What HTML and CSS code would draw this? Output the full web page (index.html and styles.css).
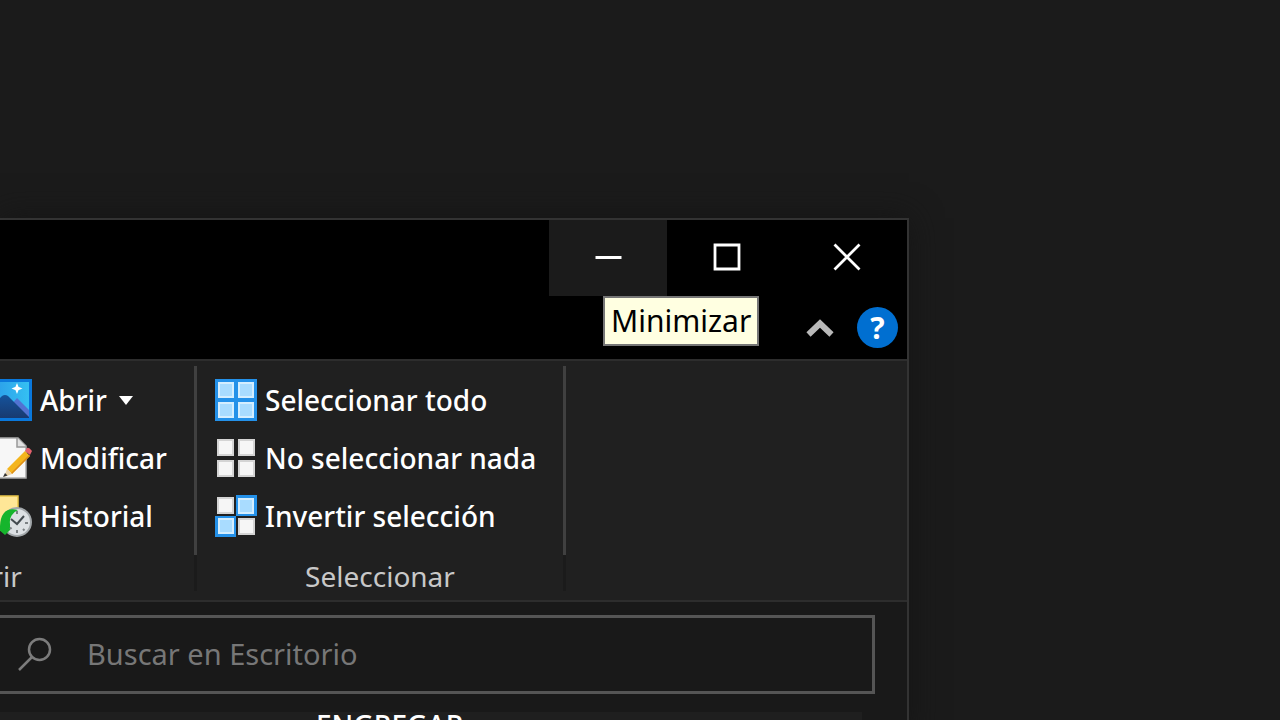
FILE: index.html
```html
<!DOCTYPE html>
<html lang="es">
<head>
<meta charset="utf-8">
<meta name="viewport" content="width=device-width, initial-scale=1">
<title>Escritorio</title>
<link rel="stylesheet" href="styles.css">
</head>
<body>
<main class="desktop">
  <section class="window">
    <header class="titlebar">
      <div class="caption">
        <button class="caption-btn minimize" type="button" aria-label="Minimizar" aria-describedby="tip">
          <svg width="28" height="28" viewBox="0 0 28 28"><path d="M1.500 14.500h26" stroke="#fff" stroke-width="3"/></svg>
          <span class="tooltip" id="tip" role="tooltip">Minimizar</span>
        </button>
        <button class="caption-btn maximize" type="button" aria-label="Maximizar">
          <svg width="28" height="28" viewBox="0 0 28 28"><path d="M2 2h24v24H2z" fill="none" stroke="#fff" stroke-width="2.800"/></svg>
        </button>
        <button class="caption-btn close" type="button" aria-label="Cerrar">
          <svg width="28" height="28" viewBox="0 0 28 28"><path d="M1.500 1.500l25 25M26.500 1.500l-25 25" stroke="#fff" stroke-width="2.800"/></svg>
        </button>
      </div>
      <div class="tabs">
        <button class="tool" type="button" aria-label="Contraer la cinta">
          <svg width="28" height="20" viewBox="0 0 28 20"><path d="M2.500 16.500L14 5.500l11.500 11" fill="none" stroke="#b9b9b9" stroke-width="6"/></svg>
        </button>
        <button class="tool help" type="button" aria-label="Ayuda">?</button>
      </div>
    </header>

    <div class="ribbon">
      <section class="group group-open">
        <div class="commands">
          <button class="command" type="button">
            <svg class="icon" viewBox="0 0 42 42">
              <defs><linearGradient id="sky" x2="1" y2="0"><stop stop-color="#2a9ae8"/><stop offset="1" stop-color="#35c0f2"/></linearGradient>
              <linearGradient id="hill" x2="0" y2="1"><stop stop-color="#15539c"/><stop offset="1" stop-color="#183a70"/></linearGradient></defs>
              <path d="M0 0h42v42H0z" fill="#0a78dc"/><path d="M0 3h39v36H0z" fill="url(#sky)"/>
              <path d="M22 25l5-6 12 12v8H22z" fill="#5273d2"/>
              <path d="M6 23l6-6q3-2 6 0l21 21v1H6z" fill="url(#hill)"/>
              <path d="M27 6l1 2.500L30.500 9.500 28 10.500 27 13l-1-2.500-2.500-1L26 8.500z" fill="#fff" stroke="#fff" stroke-width="1.500"/>
            </svg>
            <span>Abrir</span>
            <svg width="14" height="9" viewBox="0 0 14 9"><path d="M0 0h14L7 9z" fill="#fff"/></svg>
          </button>
          <button class="command" type="button">
            <svg class="icon" viewBox="0 0 42 42">
              <path d="M1 1h27l8 8v32H1z" fill="#f7f7f7" stroke="#aaa" stroke-width="1.500"/>
              <path d="M27 1v9h9" fill="#e2e2e2" stroke="#999" stroke-width="1.500"/>
              <path d="M17 32L35 14l5 5-18 18z" fill="#f4b51d"/><path d="M21 36L39 18l1 1-18 18z" fill="#dc8b19"/>
              <path d="M35 14l2-3q2-1 5 3l-2 4z" fill="#e4616d"/>
              <path d="M17 32l5 5-8 3z" fill="#ead2a8"/><path d="M15 36l2.500 2.500L13 40z" fill="#333"/>
            </svg>
            <span>Modificar</span>
          </button>
          <button class="command" type="button">
            <svg class="icon" viewBox="0 0 42 42">
              <path d="M0 1h28v34H0z" fill="#ffe797" stroke="#eac64a" stroke-width="1.500"/>
              <circle cx="27" cy="27" r="14" fill="#dce0e3" stroke="#a2a7aa" stroke-width="2"/>
              <path d="M20 29a13 13 0 0 1 8-14Q11 11 10 31l-3 2 8 7 5-5z" fill="#16b52c"/>
              <path d="M21 24l6 5 7-8" fill="none" stroke="#444b50" stroke-width="2"/>
              <path d="M27 16v3M27 35v3M35 28h3M33 34l1.500 1.500M20 34l1.500-1.500" stroke="#7c8184" stroke-width="2"/>
            </svg>
            <span>Historial</span>
          </button>
        </div>
        <h2 class="group-name">Abrir</h2>
      </section>
      <div class="divider"></div>

      <section class="group group-select">
        <div class="commands">
          <button class="command" type="button">
            <svg class="icon" viewBox="0 0 42 42">
              <path d="M0 0h42v42H0z" fill="#2491e9"/>
              <g fill="#a9dcff" stroke="#d4eeff" stroke-width="2"><path d="M4 4h14v14H4zM24 4h14v14H24zM4 24h14v14H4zM24 24h14v14H24z"/></g>
            </svg>
            <span>Seleccionar todo</span>
          </button>
          <button class="command" type="button">
            <svg class="icon" viewBox="0 0 42 42">
              <g fill="#f6f6f6" stroke="#d4d4d4" stroke-width="2"><path d="M3 3h15v15H3zM24 3h15v15H24zM3 24h15v15H3zM24 24h15v15H24z"/></g>
            </svg>
            <span>No seleccionar nada</span>
          </button>
          <button class="command" type="button">
            <svg class="icon" viewBox="0 0 42 42">
              <g fill="#f6f6f6" stroke="#d4d4d4" stroke-width="2"><path d="M3 3h15v15H3zM24 24h15v15H24z"/></g>
              <path d="M21 0h21v21H21zM0 21h21v21H0z" fill="#2491e9"/>
              <g fill="#a9dcff" stroke="#d4eeff" stroke-width="2"><path d="M24 4h14v14H24zM4 24h14v14H4z"/></g>
            </svg>
            <span>Invertir selección</span>
          </button>
        </div>
        <h2 class="group-name">Seleccionar</h2>
      </section>
      <div class="divider"></div>
    </div>

    <div class="address">
      <label class="search">
        <svg width="34" height="34" viewBox="0 0 34 34"><g fill="none" stroke="#7c7c7c" stroke-width="2.500"><circle cx="21.500" cy="12.500" r="10.500"/><path d="M14 20L1 33"/></g></svg>
        <input class="search-input" type="text" placeholder="Buscar en Escritorio" aria-label="Buscar en Escritorio">
      </label>
    </div>

    <div class="content"><p class="column-title">ENGREGAR</p></div>
  </section>
</main>
</body>
</html>
```
FILE: styles.css
```css
* { box-sizing: border-box; }

body {
  margin: 0;
  overflow: hidden;
  background: #1b1b1b;
  color: #fff;
  font-family: "Noto Sans", "Open Sans", sans-serif;
  font-size: 28px;
  line-height: 36px;
}

button {
  margin: 0;
  padding: 0;
  border: 0;
  background: none;
  color: inherit;
  font: inherit;
}

svg { display: block; flex: none; }

.desktop {
  height: 100vh;
  padding: 218px 371px 0 0;
  overflow: hidden;
}

.window {
  border: solid #333;
  border-width: 2px 2px 0 0;
  background: #191919;
  box-shadow: 0 0 30px #151515;
}

.titlebar { background: #000; }

.caption {
  display: flex;
  justify-content: flex-end;
}

.caption-btn {
  display: flex;
  align-items: center;
  justify-content: center;
  width: 120px;
  height: 76px;
  padding-bottom: 2px;
}

.minimize {
  position: relative;
  width: 118px;
  background: #1b1b1b;
}

.tooltip {
  position: absolute;
  z-index: 1;
  top: 76px;
  left: 54px;
  padding: 5px 6px;
  border: 2px solid #767676;
  background: #ffffe1;
  color: #000;
  font-size: 30px;
}

.tabs {
  display: flex;
  align-items: center;
  justify-content: flex-end;
  gap: 23px;
  height: 63px;
  padding-right: 9px;
}

.help {
  width: 41px;
  height: 41px;
  border-radius: 50%;
  background: #006fd1;
  font-size: 30px;
  font-weight: 700;
  line-height: 41px;
}

.ribbon {
  display: flex;
  overflow: hidden;
  padding-top: 5px;
  border: solid #2d2d2d;
  border-width: 2px 0;
  background: #202020;
}

.group {
  display: flex;
  flex-direction: column;
  padding-top: 5px;
}

.group-open {
  width: 410px;
  margin-left: -216px;
  flex: none;
}

.group-select { width: 366px; }

.commands {
  display: flex;
  flex-direction: column;
  align-items: flex-start;
  padding-left: 18px;
  font-weight: 500;
}

.group-open .commands { padding-left: 206px; }

.command {
  display: flex;
  align-items: center;
  gap: 8px;
  height: 58px;
  white-space: nowrap;
}

.group-open .command { gap: 12px; }
.group-open .icon { margin-right: -4px; }

.icon {
  width: 42px;
  height: 42px;
}

.group-name {
  margin: 13px 0 6px;
  color: #c8c8c8;
  font-size: 28px;
  font-weight: 400;
  text-align: center;
}

.divider {
  width: 3px;
  height: 189px;
  background: #404040;
  box-shadow: 0 36px 0 #1b1b1b;
}

.address { padding: 13px 32px 18px 0; }

.search {
  display: flex;
  align-items: center;
  gap: 35px;
  height: 79px;
  padding: 0 0 2px 18px;
  border: solid #555;
  border-width: 3px 3px 3px 0;
}

.search-input {
  flex: 1;
  min-width: 0;
  padding: 0;
  border: 0;
  outline: 0;
  background: none;
  color: #fff;
  font: inherit;
  font-size: 29px;
}

.search-input::placeholder { color: #777; opacity: 1; }

.content {
  margin-right: 45px;
  padding-left: 316px;
  background: #1f1f1f;
}

.column-title {
  margin: 0;
  font-weight: 500;
  line-height: 26px;
}
```
